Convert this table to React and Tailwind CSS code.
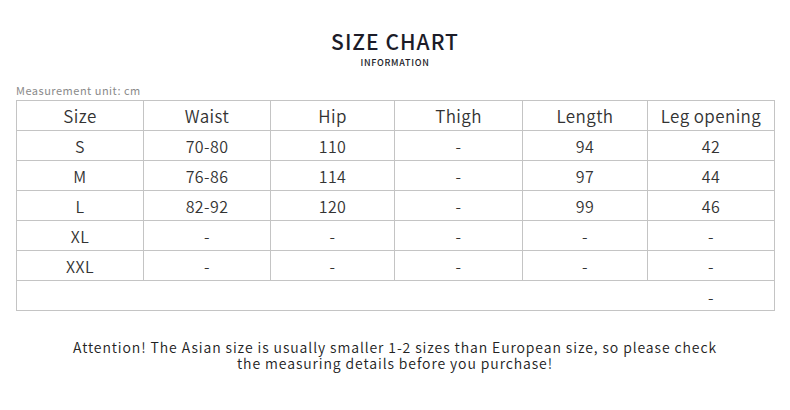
const headers = ['Size', 'Waist', 'Hip', 'Thigh', 'Length', 'Leg opening']

const rows = [
  ['S', '70-80', '110', '-', '94', '42'],
  ['M', '76-86', '114', '-', '97', '44'],
  ['L', '82-92', '120', '-', '99', '46'],
  ['XL', '-', '-', '-', '-', '-'],
  ['XXL', '-', '-', '-', '-', '-'],
]

const font = { fontFamily: '"Noto Sans CJK SC", "Noto Sans", sans-serif' }

export default function App() {
  return (
    <div className="w-[790px] h-[410px] bg-white text-[#333] font-[350]" style={font}>
      {/* Title */}
      <div className="pt-[28px] flex flex-col items-center">
        <h1 className="text-[21px] leading-[26px] font-medium tracking-[1px] text-[#1c1c28]">SIZE CHART</h1>
        <p className="text-[9px] leading-[12px] font-medium tracking-[0.7px] text-[#1c1c28] mt-[3px]">INFORMATION</p>
      </div>

      {/* Table */}
      <div className="px-[16px] mt-[14px]">
        <p className="text-[11px] leading-[14px] font-normal text-[#8a8a8a] tracking-[0.5px]">Measurement unit: cm</p>
        <table className="mt-[3px] w-[758px] border-collapse table-fixed">
          <colgroup>
            <col className="w-[127px]" />
            <col className="w-[127px]" />
            <col className="w-[124px]" />
            <col className="w-[128px]" />
            <col className="w-[125px]" />
            <col className="w-[127px]" />
          </colgroup>
          <thead>
            <tr className="h-[30px]">
              {headers.map((h) => (
                <th key={h} className="border border-[#c4c4c4] font-[350] text-[17px] leading-[20px] tracking-[0.4px] p-0 pt-[1px]">
                  {h}
                </th>
              ))}
            </tr>
          </thead>
          <tbody>
            {rows.map((r) => (
              <tr key={r[0]} className="h-[30px]">
                {r.map((c, i) => (
                  <td key={i} className="border border-[#c4c4c4] text-center text-[16px] leading-[20px] tracking-[0.4px] p-0 pt-[1px]">
                    {c}
                  </td>
                ))}
              </tr>
            ))}
            <tr className="h-[30px]">
              <td colSpan={5} className="border border-[#c4c4c4] [border-right-style:hidden] p-0" />
              <td className="border border-[#c4c4c4] text-center text-[16px] leading-[20px] p-0 pt-[3px]">-</td>
            </tr>
          </tbody>
        </table>
      </div>

      {/* Note */}
      <p className="mt-[28px] text-center text-[14px] leading-[16px] text-[#222] tracking-[0.9px]">
        Attention! The Asian size is usually smaller 1-2 sizes than European size, so please check
        <br />
        the measuring details before you purchase!
      </p>
    </div>
  )
}
